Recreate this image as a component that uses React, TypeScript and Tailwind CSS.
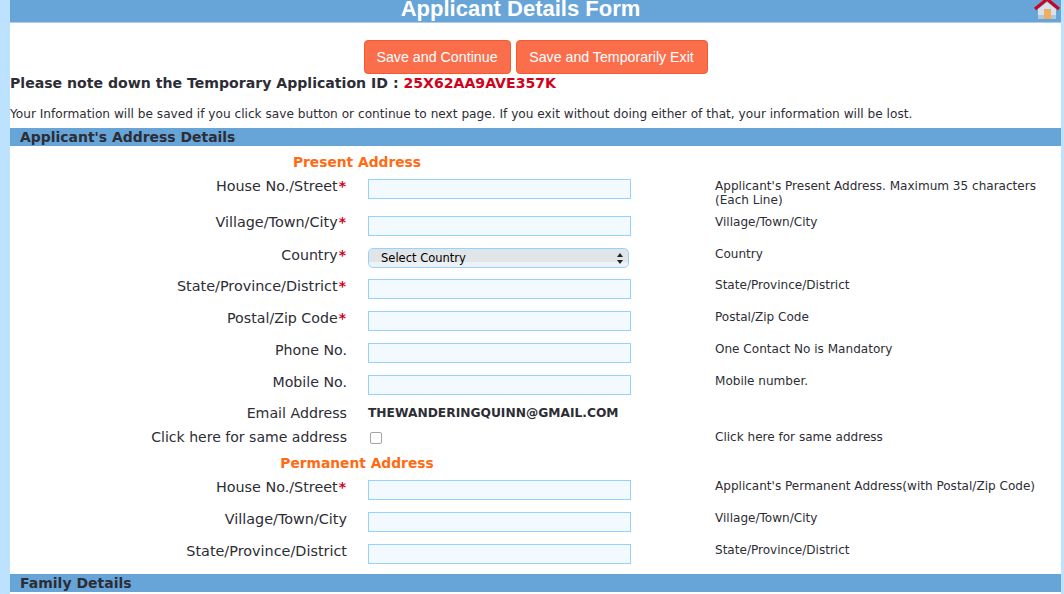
import React from "react";

const V = "font-['Verdana','DejaVu_Sans',sans-serif]";

function Row({ label, req, help, h, help2, children, labelClass = "pt-0", helpClass = "-mt-[1px]", sizeClass = "text-[14.2px]" }: { label: string; req?: boolean; help?: string; h: string; help2?: string; children?: React.ReactNode; labelClass?: string; helpClass?: string; sizeClass?: string }) {
  return (
    <div className={`flex items-start ${h}`}>
      <div className={`w-[337px] shrink-0 text-right leading-[14px] text-[#2d2d35] ${sizeClass} ${labelClass}`}>
        {label}
        {req && <span className="text-[#d0021b] font-bold text-[14px] px-[1px]">*</span>}
      </div>
      <div className="w-[263px] ml-[21px] shrink-0">{children}</div>
      <div className={`ml-[84px] w-[330px] shrink-0 text-[12.05px] leading-[14px] text-[#2d2d35] ${helpClass}`}>
        {help}
        {help2 && <div>{help2}</div>}
      </div>
    </div>
  );
}

function Input() {
  return <div className="w-[263px] h-[20px] border border-[#94d3ff] bg-[#f2f9ff]" />;
}

function HomeIcon() {
  return (
    <svg width="28" height="20" viewBox="0 0 28 20" className="absolute right-0 top-0">
      <path d="M5 9 L14 2 L23 9 V19 H5 Z" fill="#d6e3ec" />
      <rect x="5" y="15" width="18" height="4" fill="#b3c8d8" />
      <rect x="11" y="9" width="7" height="10" fill="#f0ae62" />
      <path d="M2 9 L14 -1 L26 9" fill="none" stroke="#d0021b" strokeWidth="3" />
    </svg>
  );
}

export default function App() {
  return (
    <div className={`w-[1064px] h-[594px] overflow-hidden bg-[#bde2ff] pl-[10px] pr-[3px] ${V}`}>
      <div className="h-full bg-white">
        <div className="relative h-[23px] bg-[#67a5d9] border-b border-[#a9cdea] flex justify-center items-start">
          <span className="font-['Liberation_Sans',Arial,sans-serif] font-bold text-[22px] leading-[18px] text-white -ml-[30px]">Applicant Details Form</span>
          <HomeIcon />
        </div>
        <div className="flex justify-center gap-[5px] mt-[17px] font-['Liberation_Sans',Arial,sans-serif]">
          <button className="h-[34px] w-[147px] pt-[1px] rounded-[4px] bg-[#fb6e4c] border border-[#f4592f] text-white text-[14.25px]">Save and Continue</button>
          <button className="h-[34px] w-[192px] pt-[1px] rounded-[4px] bg-[#fb6e4c] border border-[#f4592f] text-white text-[14.2px]">Save and Temporarily Exit</button>
        </div>
        <div className="font-bold text-[14.1px] leading-[16px] text-[#2d2d35] mt-[1px]">
          Please note down the Temporary Application ID : <span className="text-[#d0021b]">25X62AA9AVE357K</span>
        </div>
        <div className="text-[12.15px] leading-[14px] text-[#2d2d35] mt-[16px]">
          Your Information will be saved if you click save button or continue to next page. If you exit without doing either of that, your information will be lost.
        </div>
        <div className="h-[18px] mt-[7px] bg-[#67a5d9] pl-[10px] font-bold text-[13.95px] leading-[18px] text-[#2d2d35]">Applicant's Address Details</div>
        <div className="h-[33px] w-[694px] text-center pt-[8px] font-bold text-[13.8px] leading-[16px] text-[#ff6a13]">Present Address</div>
        <Row label="House No./Street" req h="h-[37px]" sizeClass="text-[14.35px]" help="Applicant's Present Address. Maximum 35 characters" help2="(Each Line)" helpClass="pt-0"><Input /></Row>
        <Row label="Village/Town/City" req h="h-[32px]" sizeClass="text-[14.4px]" help="Village/Town/City" labelClass="-mt-[1px]"><Input /></Row>
        <Row label="Country" req h="h-[31px]" help="Country">
          <div className="w-[261px] h-[20px] rounded-[5px] border border-[#94d3ff] bg-[linear-gradient(#e1e5e8_75%,#eff2f5_75%)] flex items-center justify-between pl-[12px] pr-[5px] text-[11.5px] text-black">
            <span className="pt-[1px]">Select Country</span>
            <svg width="6" height="11" viewBox="0 0 6 11"><path d="M3 0L6 4H0ZM3 11L0 7H6Z" fill="#222" /></svg>
          </div>
        </Row>
        <Row label="State/Province/District" req h="h-[32px]" sizeClass="text-[14.4px]" help="State/Province/District"><Input /></Row>
        <Row label="Postal/Zip Code" req h="h-[32px]" help="Postal/Zip Code"><Input /></Row>
        <Row label="Phone No." h="h-[32px]" help="One Contact No is Mandatory"><Input /></Row>
        <Row label="Mobile No." h="h-[31px]" help="Mobile number."><Input /></Row>
        <Row label="Email Address" h="h-[24px]">
          <span className="font-bold text-[12.25px] leading-[14px] text-[#2d2d35] block">THEWANDERINGQUINN@GMAIL.COM</span>
        </Row>
        <Row label="Click here for same address" h="h-[18px]" sizeClass="text-[14.05px]" help="Click here for same address" helpClass="pt-0">
          <div className="ml-[2px] mt-[2px] w-[12px] h-[12px] rounded-[2px] border border-[#a5a5a5] bg-white" />
        </Row>
        <div className="h-[32px] w-[694px] text-center pt-[7px] font-bold text-[13.8px] leading-[16px] text-[#ff6a13]">Permanent Address</div>
        <Row label="House No./Street" req h="h-[32px]" sizeClass="text-[14.35px]" help="Applicant's Permanent Address(with Postal/Zip Code)"><Input /></Row>
        <Row label="Village/Town/City" h="h-[32px]" sizeClass="text-[14.4px]" help="Village/Town/City"><Input /></Row>
        <Row label="State/Province/District" h="h-[30px]" sizeClass="text-[14.4px]" help="State/Province/District"><Input /></Row>
        <div className="h-[18px] bg-[#67a5d9] pl-[10px] font-bold text-[14px] leading-[18px] text-[#2d2d35]">Family Details</div>
      </div>
    </div>
  );
}
